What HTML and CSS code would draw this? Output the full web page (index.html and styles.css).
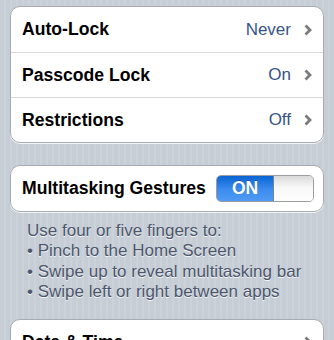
FILE: index.html
```html
<!DOCTYPE html>
<html>
<head>
<meta charset="utf-8">
<link rel="stylesheet" href="styles.css">
</head>
<body>
<div class="page">
  <div class="group">
    <div class="row">
      <span class="label">Auto-Lock</span>
      <span class="value">Never</span>
      <svg class="chev" width="8" height="12" viewBox="0 0 8 12"><path d="M1.5 1.5 L6 6 L1.5 10.5" fill="none" stroke="#7b7b7b" stroke-width="2.8"/></svg>
    </div>
    <div class="row">
      <span class="label">Passcode Lock</span>
      <span class="value">On</span>
      <svg class="chev" width="8" height="12" viewBox="0 0 8 12"><path d="M1.5 1.5 L6 6 L1.5 10.5" fill="none" stroke="#7b7b7b" stroke-width="2.8"/></svg>
    </div>
    <div class="row">
      <span class="label">Restrictions</span>
      <span class="value">Off</span>
      <svg class="chev" width="8" height="12" viewBox="0 0 8 12"><path d="M1.5 1.5 L6 6 L1.5 10.5" fill="none" stroke="#7b7b7b" stroke-width="2.8"/></svg>
    </div>
  </div>

  <div class="group second">
    <div class="row">
      <span class="label">Multitasking Gestures</span>
      <div class="toggle">
        <div class="on">ON</div>
        <div class="knob"></div>
      </div>
    </div>
  </div>

  <div class="footer">
    <div>Use four or five fingers to:</div>
    <div>• Pinch to the Home Screen</div>
    <div>• Swipe up to reveal multitasking bar</div>
    <div>• Swipe left or right between apps</div>
  </div>

  <div class="group third">
    <div class="row">
      <span class="label">Date &amp; Time</span>
      <span class="value"></span>
      <svg class="chev" width="8" height="12" viewBox="0 0 8 12"><path d="M1.5 1.5 L6 6 L1.5 10.5" fill="none" stroke="#7b7b7b" stroke-width="2.8"/></svg>
    </div>
  </div>
</div>
</body>
</html>
```
FILE: styles.css
```css
html, body {
  margin: 0;
  padding: 0;
}
body {
  width: 334px;
  height: 340px;
  overflow: hidden;
  background-color: #c8cfd7;
  background-image: repeating-linear-gradient(90deg, #c6cdd5 0px, #c6cdd5 4px, #cbd2d9 4px, #cbd2d9 6px);
  font-family: "Liberation Sans", Arial, sans-serif;
}
.page {
  padding: 6px 10px 0 10px;
}
.group {
  background: #fff;
  border: 1px solid #a8abb0;
  border-radius: 10px;
  box-shadow: 0 1px 0 rgba(255,255,255,0.8);
}
.second {
  margin-top: 22px;
}
.third {
  margin-top: 16px;
}
.row {
  height: 44px;
  display: flex;
  align-items: center;
  padding: 0 11px 0 11px;
  border-top: 1px solid #d7d7d7;
}
.row:first-child {
  border-top: none;
  height: 45px;
}
.label {
  font-weight: bold;
  font-size: 17.6px;
  color: #000;
  flex: 1;
}
.value {
  font-size: 17px;
  color: #385487;
  margin-right: 13px;
}
.chev {
  display: block;
}
.toggle {
  width: 96px;
  height: 25px;
  border: 1px solid #9a9ea3;
  border-radius: 5px;
  display: flex;
  overflow: hidden;
  margin-right: -2px;
}
.on {
  width: 56px;
  background: linear-gradient(#0a64d2, #3d8df0 55%, #4f9af2);
  color: #fff;
  font-weight: bold;
  font-size: 17.5px;
  display: flex;
  align-items: center;
  justify-content: center;
  text-shadow: 0 -1px 0 rgba(0,0,0,0.25);
  border-right: 1px solid #7a8290;
}
.knob {
  flex: 1;
  background: linear-gradient(#d9d9d9, #f8f8f8 45%, #fefefe);
}
.footer {
  padding: 9px 0 0 17px;
  font-size: 17px;
  line-height: 20.4px;
  color: #4c566c;
  text-shadow: 0 1px 0 rgba(255,255,255,0.8);
}
```
